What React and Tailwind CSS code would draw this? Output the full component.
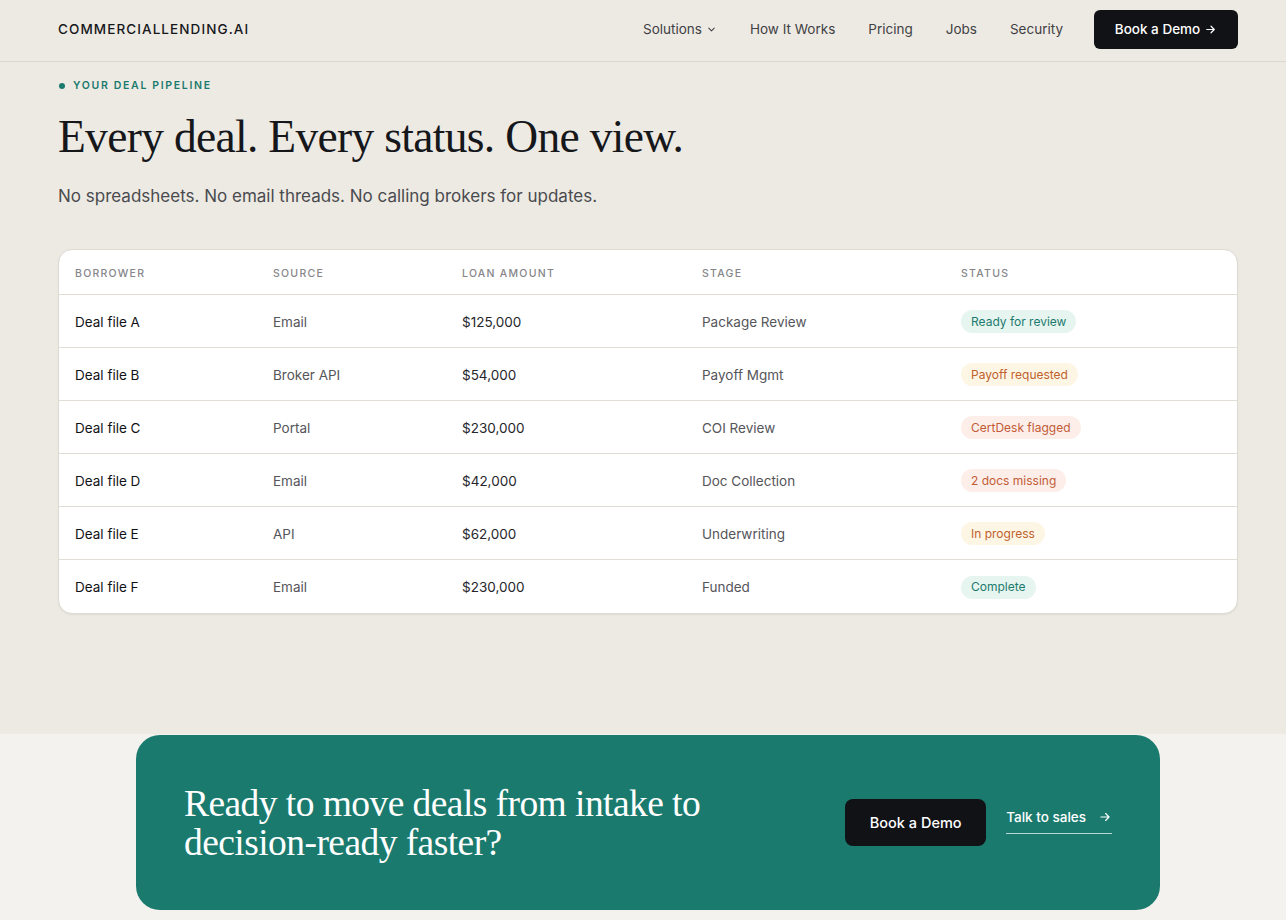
import React from "react";

const deals = [
  { name: "Deal file A", source: "Email", amount: "$125,000", stage: "Package Review", status: "Ready for review", tone: "green" },
  { name: "Deal file B", source: "Broker API", amount: "$54,000", stage: "Payoff Mgmt", status: "Payoff requested", tone: "amber" },
  { name: "Deal file C", source: "Portal", amount: "$230,000", stage: "COI Review", status: "CertDesk flagged", tone: "red" },
  { name: "Deal file D", source: "Email", amount: "$42,000", stage: "Doc Collection", status: "2 docs missing", tone: "red" },
  { name: "Deal file E", source: "API", amount: "$62,000", stage: "Underwriting", status: "In progress", tone: "amber" },
  { name: "Deal file F", source: "Email", amount: "$230,000", stage: "Funded", status: "Complete", tone: "green" },
];

const toneClasses = {
  green: "bg-[#e7f5f0] text-[#1b7a6e]",
  amber: "bg-[#fef6e4] text-[#c0612e]",
  red: "bg-[#fdeeea] text-[#c25c35]",
};

const cols = "grid grid-cols-[198px_189px_240px_259px_1fr] px-4 items-center";
const serif = { fontFamily: "'Liberation Serif', 'Times New Roman', serif" };

function Header() {
  return (
    <header className="h-[62px] pb-[2px] border-b border-[#dcd8d0] flex items-center justify-between pl-[58px] pr-[48px]">
      <div className="text-[13.5px] font-medium tracking-[0.08em] text-[#16171b]">COMMERCIALLENDING.AI</div>
      <nav className="flex items-center text-[13.5px] text-[#3f3f44]">
        <a className="flex items-center gap-1 mr-[33px]">
          Solutions
          <svg width="11" height="11" viewBox="0 0 24 24" fill="none" stroke="currentColor" strokeWidth="2.2" strokeLinecap="round" strokeLinejoin="round">
            <path d="m6 9 6 6 6-6" />
          </svg>
        </a>
        <a className="mr-[33px]">How It Works</a>
        <a className="mr-[33px]">Pricing</a>
        <a className="mr-[33px]">Jobs</a>
        <a className="mr-[31px]">Security</a>
        <button className="h-[39px] w-[144px] rounded-md bg-[#111216] text-white text-[13.5px] font-medium flex items-center justify-center gap-1">
          Book a Demo
          <svg width="13" height="13" viewBox="0 0 24 24" fill="none" stroke="currentColor" strokeWidth="2.2" strokeLinecap="round" strokeLinejoin="round">
            <path d="M5 12h14M13 6l6 6-6 6" />
          </svg>
        </button>
      </nav>
    </header>
  );
}

export default function App() {
  return (
    <div className="min-h-[920px] bg-[#f4f2ee]" style={{ fontFamily: "Inter, 'Noto Sans', sans-serif" }}>
      <div className="bg-[#edeae3] h-[734px]">
        <Header />
        <main className="pl-[58px] pr-[48px]">
          <div className="pt-[16px] flex items-center gap-[8px] text-[10.5px] font-semibold tracking-[0.16em] text-[#1b7a6e]">
            <span className="w-[6px] h-[6px] rounded-full bg-[#1b7a6e] ml-[1px]" />
            YOUR DEAL PIPELINE
          </div>
          <h1 className="mt-[16px] text-[45.5px] leading-[54px] text-[#16171b] tracking-[-0.015em]" style={serif}>
            Every deal. Every status. One view.
          </h1>
          <p className="mt-[20px] text-[17px] text-[#4a4a4f]">No spreadsheets. No email threads. No calling brokers for updates.</p>

          <div className="mt-[40px] bg-white rounded-[14px] border border-[#dedad2] overflow-hidden shadow-[0_1px_2px_rgba(0,0,0,0.06)]">
            <div className={`${cols} h-[45px] pt-[3px] text-[10.5px] tracking-[0.12em] text-[#86868a] font-medium border-b border-[#e2ded7]`}>
              <div>BORROWER</div>
              <div>SOURCE</div>
              <div>LOAN AMOUNT</div>
              <div>STAGE</div>
              <div>STATUS</div>
            </div>
            {deals.map((d, i) => (
              <div
                key={d.name}
                className={`${cols} h-[53px] pt-[1px] text-[13.5px] ${i < deals.length - 1 ? "border-b border-[#e2ded7]" : ""}`}
              >
                <div className="text-[#111216]">{d.name}</div>
                <div className="text-[#55555a]">{d.source}</div>
                <div className="text-[#26262a]">{d.amount}</div>
                <div className="text-[#55555a]">{d.stage}</div>
                <div>
                  <span className={`inline-flex items-center h-[23px] px-[10px] rounded-full text-[12px] ${toneClasses[d.tone]}`}>
                    {d.status}
                  </span>
                </div>
              </div>
            ))}
          </div>
        </main>
      </div>

      <section className="pt-[1px] pl-[136px]">
        <div className="w-[1024px] h-[175px] rounded-[24px] bg-[#1b7a6e] flex items-center justify-between px-[48px]">
          <h2 className="text-[37.5px] leading-[39px] text-white tracking-[-0.015em] w-[580px]" style={serif}>
            Ready to move deals from intake to decision-ready faster?
          </h2>
          <div className="flex items-center gap-[20px]">
            <button className="h-[47px] w-[141px] rounded-lg bg-[#111216] text-white text-[14.5px] font-medium">Book a Demo</button>
            <a className="flex items-center gap-[12px] whitespace-nowrap text-white text-[13.5px] font-medium border-b border-white/70 pb-[6px] mb-[4px]">
              Talk to sales
              <svg width="14" height="14" viewBox="0 0 24 24" fill="none" stroke="currentColor" strokeWidth="2" strokeLinecap="round" strokeLinejoin="round">
                <path d="M5 12h14M13 6l6 6-6 6" />
              </svg>
            </a>
          </div>
        </div>
      </section>
    </div>
  );
}
